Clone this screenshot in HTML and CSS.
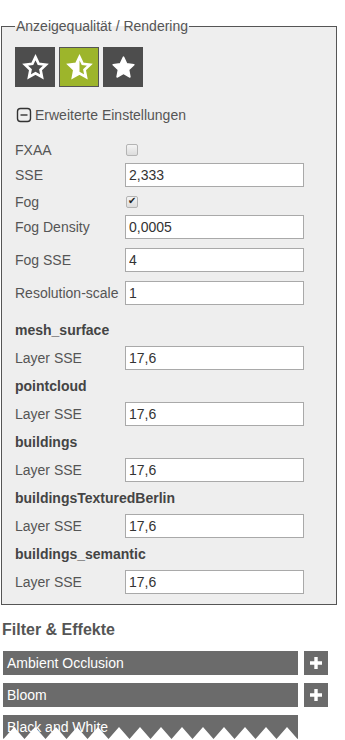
FILE: index.html
```html
<!DOCTYPE html>
<html lang="de">

<head>
  <meta charset="UTF-8">
  <meta name="viewport" content="width=device-width, initial-scale=1.0">
  <link rel="stylesheet" href="styles.css">
  <title>Anzeigequalität</title>
</head>

<body>
  <fieldset class="quality">
    <legend>Anzeigequalität / Rendering</legend>
    <div class="presets">
      <div class="preset">
        <svg width="27" height="27" viewBox="0 0 24 24"><path d="M12 2.8l2.8 5.9 6.4.8-4.7 4.5 1.2 6.4L12 17.2l-5.7 3.2 1.2-6.4-4.7-4.5 6.4-.8z" fill="none" stroke="#fff" stroke-width="2.4" stroke-linejoin="miter"/></svg>
      </div>
      <div class="preset active">
        <svg width="27" height="27" viewBox="0 0 24 24"><path d="M12 2.8L9.2 8.7l-6.4.8 4.7 4.5-1.2 6.4L12 17.2z" fill="#fff"/><path d="M12 2.8l2.8 5.9 6.4.8-4.7 4.5 1.2 6.4L12 17.2l-5.7 3.2 1.2-6.4-4.7-4.5 6.4-.8z" fill="none" stroke="#fff" stroke-width="2.4"/></svg>
      </div>
      <div class="preset">
        <svg width="27" height="27" viewBox="0 0 24 24"><path d="M12 2.8l2.8 5.9 6.4.8-4.7 4.5 1.2 6.4L12 17.2l-5.7 3.2 1.2-6.4-4.7-4.5 6.4-.8z" fill="#fff" stroke="#fff" stroke-width="1.4" stroke-linejoin="round"/></svg>
      </div>
    </div>

    <div class="advancedToggle">
      <svg width="16" height="16" viewBox="0 0 16 16"><rect x="1.5" y="1.5" width="13" height="13" rx="3" fill="none" stroke="#333" stroke-width="1.4"/><path d="M4.5 8h7" stroke="#333" stroke-width="1.4"/></svg>
      <span>Erweiterte Einstellungen</span>
    </div>

    <div class="settings">
      <div class="row check"><label>FXAA</label><input type="checkbox"></div>
      <div class="row gapSmall"><label>SSE</label><input type="text" value="2,333"></div>
      <div class="row check"><label>Fog</label><input type="checkbox" checked></div>
      <div class="row"><label>Fog Density</label><input type="text" value="0,0005"></div>
      <div class="row"><label>Fog SSE</label><input type="text" value="4"></div>
      <div class="row"><label>Resolution-scale</label><input type="text" value="1"></div>

      <div class="layerName">mesh_surface</div>
      <div class="row layerRow"><label>Layer SSE</label><input type="text" value="17,6"></div>
      <div class="layerName">pointcloud</div>
      <div class="row layerRow"><label>Layer SSE</label><input type="text" value="17,6"></div>
      <div class="layerName">buildings</div>
      <div class="row layerRow"><label>Layer SSE</label><input type="text" value="17,6"></div>
      <div class="layerName">buildingsTexturedBerlin</div>
      <div class="row layerRow"><label>Layer SSE</label><input type="text" value="17,6"></div>
      <div class="layerName">buildings_semantic</div>
      <div class="row layerRow"><label>Layer SSE</label><input type="text" value="17,6"></div>
    </div>
  </fieldset>

  <div class="filters">
    <h3>Filter &amp; Effekte</h3>
    <div class="filter">
      <div class="filterName">Ambient Occlusion</div>
      <div class="filterAdd"><svg width="12" height="12" viewBox="0 0 12 12"><path d="M6 0v12M0 6h12" stroke="#fff" stroke-width="3.4"/></svg></div>
    </div>
    <div class="filter">
      <div class="filterName">Bloom</div>
      <div class="filterAdd"><svg width="12" height="12" viewBox="0 0 12 12"><path d="M6 0v12M0 6h12" stroke="#fff" stroke-width="3.4"/></svg></div>
    </div>
    <div class="filter">
      <div class="filterName torn">Black and White
        <svg class="tear" width="295" height="12" viewBox="0 0 295 12"><polygon fill="#fff" points="0,12 0,11 0.5,12 11,0 21.5,12 32,0 42.5,12 53,0 63.5,12 74,0 84.5,12 95,0 105.5,12 116,0 126.5,12 137,0 147.5,12 158,0 168.5,12 179,0 189.5,12 200,0 210.5,12 221,0 231.5,12 242,0 252.5,12 263,0 273.5,12 284,0 294.5,12 295,11.4 295,12"/></svg>
      </div>
    </div>
  </div>
</body>

</html>
```

FILE: styles.css
```css
* {
  margin: 0;
  padding: 0;
  box-sizing: border-box;
}

body {
  font-family: "Liberation Sans", Arial, sans-serif;
  font-size: 14px;
  color: #555;
  background-color: #fff;
  height: 740px;
  overflow: hidden;
}

.quality {
  width: 336px;
  margin: 18px 0 0 1px;
  padding: 13px 12px 10px 13px;
  border: 1px solid #555;
  background-color: #eee;
}

.quality legend {
  padding: 0 1px;
  font-size: 14px;
  line-height: 16px;
  color: #555;
}

.presets {
  display: flex;
  gap: 4px;
}

.preset {
  display: flex;
  align-items: center;
  justify-content: center;
  width: 40px;
  height: 40px;
  background-color: #4d4d4d;
  cursor: pointer;
}

.preset.active {
  background-color: #9db52b;
  border: 1px solid #555;
}

.advancedToggle {
  display: flex;
  align-items: center;
  gap: 3px;
  height: 16px;
  margin: 20px 0 16px 1px;
  line-height: 16px;
  cursor: pointer;
}

.settings {
  display: flex;
  flex-direction: column;
}

.row {
  display: flex;
  align-items: center;
  height: 24px;
  margin-bottom: 9px;
}

.row label {
  width: 110px;
  flex-shrink: 0;
  white-space: nowrap;
}

.row input[type="text"] {
  width: 179px;
  height: 24px;
  padding: 0 3px;
  border: 1px solid #a9a9a9;
  background-color: #fff;
  font-family: inherit;
  font-size: 14px;
  color: #333;
  outline: none;
}

.row.check {
  height: 22px;
  margin-bottom: 2px;
}

.row.gapSmall {
  margin-bottom: 4px;
}

.row input[type="checkbox"] {
  appearance: none;
  -webkit-appearance: none;
  position: relative;
  width: 12px;
  height: 12px;
  margin-left: 1px;
  border: 1px solid #b4b4b4;
  border-radius: 2px;
  background: linear-gradient(#f4f4f4, #dcdcdc);
}

.row input[type="checkbox"]:checked::after {
  content: "\2714";
  position: absolute;
  left: 1px;
  top: -2px;
  font-family: "DejaVu Sans", sans-serif;
  font-size: 10px;
  color: #222;
}

.layerName {
  height: 18px;
  margin: 7px 0;
  line-height: 18px;
  font-weight: bold;
  color: #444;
}

.row.layerRow {
  margin-bottom: 0;
}

.filters {
  padding-left: 3px;
}

.filters h3 {
  margin: 15px 0 11px -1px;
  font-size: 16px;
  line-height: 20px;
  color: #555;
}

.filter {
  display: flex;
  gap: 6px;
  margin-bottom: 8px;
}

.filterName {
  width: 295px;
  height: 24px;
  padding-left: 4px;
  line-height: 24px;
  background-color: #6b6b6b;
  color: #fff;
}

.filterAdd {
  display: flex;
  align-items: center;
  justify-content: center;
  width: 24px;
  height: 24px;
  background-color: #6b6b6b;
  cursor: pointer;
}

.torn {
  position: relative;
}

.tear {
  position: absolute;
  left: 0;
  bottom: 0;
}
```
